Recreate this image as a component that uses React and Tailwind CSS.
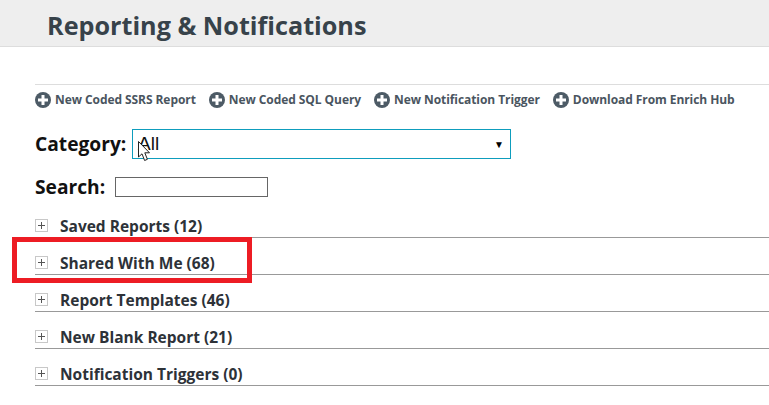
import React from 'react';

const actions = [
  { id: 1, title: 'New Coded SSRS Report' },
  { id: 2, title: 'New Coded SQL Query' },
  { id: 3, title: 'New Notification Trigger' },
  { id: 4, title: 'Download From Enrich Hub' },
];

const sections = [
  { id: 1, title: 'Saved Reports (12)' },
  { id: 2, title: 'Shared With Me (68)' },
  { id: 3, title: 'Report Templates (46)' },
  { id: 4, title: 'New Blank Report (21)' },
  { id: 5, title: 'Notification Triggers (0)' },
];

function PlusCircle() {
  return (
    <svg width="16" height="16" viewBox="0 0 16 16" className="shrink-0">
      <circle cx="8" cy="8" r="8" fill="#4d5b66" />
      <rect x="3" y="6.5" width="10" height="3" fill="#fff" />
      <rect x="6.5" y="3" width="3" height="10" fill="#fff" />
    </svg>
  );
}

function ExpandBox() {
  return (
    <svg width="13" height="13" viewBox="0 0 13 13" className="shrink-0">
      <rect x="0.5" y="0.5" width="12" height="12" fill="#fff" stroke="#c8c8c8" />
      <path d="M3 6.5H10M6.5 3V10" stroke="#555" strokeWidth="1" />
    </svg>
  );
}

function Cursor() {
  return (
    <svg width="14" height="21" viewBox="0 0 14 21" className="absolute left-[138px] top-[141px]">
      <path d="M0.5 0.5V16L4 12.8L6.6 19.5L9.4 18.3L6.8 11.8H11.5Z" fill="#fff" stroke="#222" strokeWidth="1" />
    </svg>
  );
}

export default function App() {
  return (
    <div className="relative h-[405px] w-[769px] overflow-hidden bg-white font-['Open_Sans',sans-serif]">
      <div className="h-[47px] border-b border-[#dddddd] bg-[#eeeeee] pl-[47px]">
        <h1 className="text-[25.2px] leading-[50px] font-bold text-[#37424a]">Reporting &amp; Notifications</h1>
      </div>

      <div className="pt-[37px] pl-[35px]">
        <div className="flex h-[29px] items-center gap-[13px] border-t border-[#dddddd] pt-[1px]">
          {actions.map((action) => (
            <div key={action.id} className="flex items-center gap-[4px]">
              <PlusCircle />
              <span className="text-[12px] font-bold tracking-[-0.07px] text-[#4a5560]">{action.title}</span>
            </div>
          ))}
        </div>

        <div className="mt-[16px] flex items-center">
          <label className="w-[97px] text-[19.2px] leading-[30px] font-bold text-[#111111]">Category:</label>
          <div className="flex h-[30px] w-[379px] items-center justify-between border border-[#0e9dbd] pr-[6px] pl-[5px] text-[19px] text-[#111111] font-['Liberation_Sans',sans-serif]">
            <span>All</span>
            <span className="text-[10px] text-black">▼</span>
          </div>
        </div>

        <div className="mt-[15px] flex items-center">
          <label className="w-[80px] text-[19.2px] leading-[26px] font-bold text-[#111111]">Search:</label>
          <input className="h-[20px] w-[153px] border border-[#666666] bg-white" />
        </div>

        <div className="mt-[1px]">
          {sections.map((section) => (
            <div key={section.id} className="flex h-[37px] items-end border-b border-[#999999]">
              <div className="mb-[5px] w-[25px]">
                <ExpandBox />
              </div>
              <span className="text-[15.5px] leading-[22px] font-bold text-[#2d3238]">{section.title}</span>
            </div>
          ))}
        </div>
      </div>

      <div className="absolute top-[237px] left-[12px] h-[46px] w-[240px] border-[5px] border-[#ed1c24]" />
      <Cursor />
    </div>
  );
}
